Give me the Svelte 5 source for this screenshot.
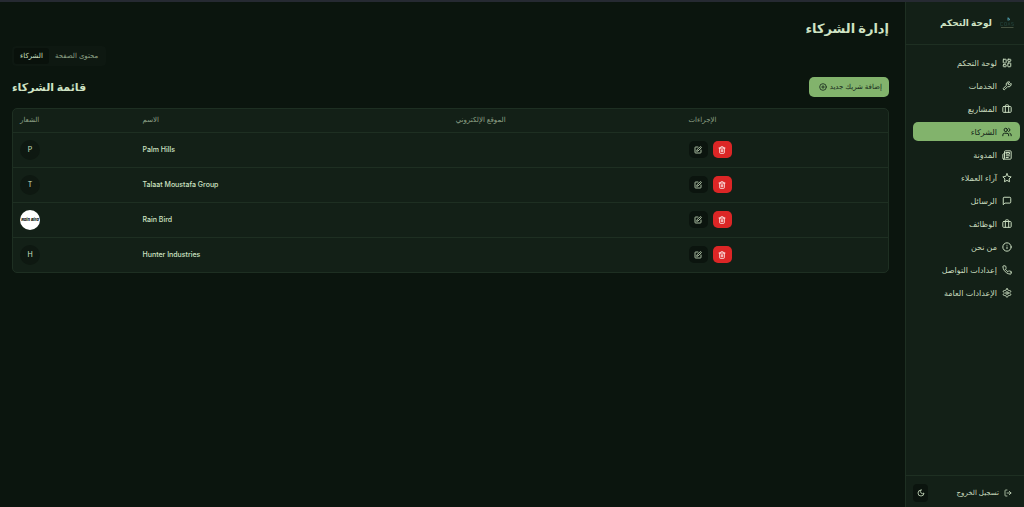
<script lang="ts">
  type Partner = { name: string; website: string; logo?: boolean };

  const menu = [
    { label: 'لوحة التحكم', icon: 'grid' },
    { label: 'الخدمات', icon: 'wrench' },
    { label: 'المشاريع', icon: 'briefcase' },
    { label: 'الشركاء', icon: 'users' },
    { label: 'المدونة', icon: 'newspaper' },
    { label: 'آراء العملاء', icon: 'star' },
    { label: 'الرسائل', icon: 'message' },
    { label: 'الوظائف', icon: 'briefcase' },
    { label: 'من نحن', icon: 'info' },
    { label: 'إعدادات التواصل', icon: 'phone' },
    { label: 'الإعدادات العامة', icon: 'settings' }
  ];

  const tabs = ['الشركاء', 'محتوى الصفحة'];

  let partners = $state<Partner[]>([
    { name: 'Palm Hills', website: '' },
    { name: 'Talaat Moustafa Group', website: '' },
    { name: 'Rain Bird', website: '', logo: true },
    { name: 'Hunter Industries', website: '' }
  ]);
  let activeItem = $state('الشركاء');
  let activeTab = $state('الشركاء');

  function removePartner(name: string) {
    partners = partners.filter((p) => p.name !== name);
  }
</script>

{#snippet icon(name: string)}
  <svg class="icon" viewBox="0 0 24 24" aria-hidden="true">
    {#if name === 'grid'}
      <rect x="3" y="3" width="7" height="9" rx="1" />
      <rect x="14" y="3" width="7" height="5" rx="1" />
      <rect x="14" y="12" width="7" height="9" rx="1" />
      <rect x="3" y="16" width="7" height="5" rx="1" />
    {:else if name === 'wrench'}
      <path d="M14.7 6.3a1 1 0 0 0 0 1.4l1.6 1.6a1 1 0 0 0 1.4 0l3.77-3.77a6 6 0 0 1-7.94 7.94l-6.91 6.91a2.12 2.12 0 0 1-3-3l6.91-6.91a6 6 0 0 1 7.94-7.94l-3.76 3.76z" />
    {:else if name === 'briefcase'}
      <rect x="2" y="6" width="20" height="14" rx="2" />
      <path d="M16 20V4a2 2 0 0 0-2-2h-4a2 2 0 0 0-2 2v16" />
    {:else if name === 'users'}
      <path d="M16 21v-2a4 4 0 0 0-4-4H6a4 4 0 0 0-4 4v2" />
      <circle cx="9" cy="7" r="4" />
      <path d="M22 21v-2a4 4 0 0 0-3-3.87" />
      <path d="M16 3.13a4 4 0 0 1 0 7.75" />
    {:else if name === 'newspaper'}
      <path d="M4 22h16a2 2 0 0 0 2-2V4a2 2 0 0 0-2-2H8a2 2 0 0 0-2 2v16a2 2 0 0 1-2 2Zm0 0a2 2 0 0 1-2-2v-9c0-1.1.9-2 2-2h2" />
      <path d="M18 14h-8M15 18h-5M10 6h8v4h-8V6Z" />
    {:else if name === 'star'}
      <path d="M12 2l3.09 6.26L22 9.27l-5 4.87 1.18 6.88L12 17.77l-6.18 3.25L7 14.14 2 9.27l6.91-1.01L12 2z" />
    {:else if name === 'message'}
      <path d="M21 15a2 2 0 0 1-2 2H7l-4 4V5a2 2 0 0 1 2-2h14a2 2 0 0 1 2 2z" />
    {:else if name === 'info'}
      <circle cx="12" cy="12" r="10" />
      <path d="M12 16v-4M12 8h.01" />
    {:else if name === 'phone'}
      <path d="M22 16.92v3a2 2 0 0 1-2.18 2 19.79 19.79 0 0 1-8.63-3.07 19.5 19.5 0 0 1-6-6 19.79 19.79 0 0 1-3.07-8.67A2 2 0 0 1 4.11 2h3a2 2 0 0 1 2 1.72 12.84 12.84 0 0 0 .7 2.81 2 2 0 0 1-.45 2.11L8.09 9.91a16 16 0 0 0 6 6l1.27-1.27a2 2 0 0 1 2.11-.45 12.84 12.84 0 0 0 2.81.7A2 2 0 0 1 22 16.92z" />
    {:else if name === 'settings'}
      <path d="M12.22 2h-.44a2 2 0 0 0-2 2v.18a2 2 0 0 1-1 1.73l-.43.25a2 2 0 0 1-2 0l-.15-.08a2 2 0 0 0-2.73.73l-.22.38a2 2 0 0 0 .73 2.73l.15.1a2 2 0 0 1 1 1.72v.51a2 2 0 0 1-1 1.74l-.15.09a2 2 0 0 0-.73 2.73l.22.38a2 2 0 0 0 2.73.73l.15-.08a2 2 0 0 1 2 0l.43.25a2 2 0 0 1 1 1.73V20a2 2 0 0 0 2 2h.44a2 2 0 0 0 2-2v-.18a2 2 0 0 1 1-1.73l.43-.25a2 2 0 0 1 2 0l.15.08a2 2 0 0 0 2.73-.73l.22-.39a2 2 0 0 0-.73-2.73l-.15-.08a2 2 0 0 1-1-1.74v-.5a2 2 0 0 1 1-1.74l.15-.09a2 2 0 0 0 .73-2.73l-.22-.38a2 2 0 0 0-2.73-.73l-.15.08a2 2 0 0 1-2 0l-.43-.25a2 2 0 0 1-1-1.73V4a2 2 0 0 0-2-2z" />
      <circle cx="12" cy="12" r="3" />
    {:else if name === 'logout'}
      <path d="M9 21H5a2 2 0 0 1-2-2V5a2 2 0 0 1 2-2h4M16 17l5-5-5-5M21 12H9" />
    {:else if name === 'moon'}
      <path d="M12 3a6 6 0 0 0 9 9 9 9 0 1 1-9-9Z" />
    {:else if name === 'plus'}
      <circle cx="12" cy="12" r="10" />
      <path d="M8 12h8M12 8v8" />
    {:else if name === 'edit'}
      <path d="M12 3H5a2 2 0 0 0-2 2v14a2 2 0 0 0 2 2h14a2 2 0 0 0 2-2v-7" />
      <path d="M18.375 2.625a2.12 2.12 0 0 1 3 3L12 15l-4 1 1-4Z" />
    {:else if name === 'trash'}
      <path d="M3 6h18M19 6v14a2 2 0 0 1-2 2H7a2 2 0 0 1-2-2V6M8 6V4a2 2 0 0 1 2-2h4a2 2 0 0 1 2 2v2M10 11v6M14 11v6" />
    {/if}
  </svg>
{/snippet}

<div class="layout" dir="rtl">
  <aside class="sidebar">
    <header class="brand">
      <svg class="logo" viewBox="0 0 28 24" aria-hidden="true">
        <path d="M16 1v6M16 2l4 3-3 1" stroke="#4a97a6" stroke-width="2" />
        <path d="M6 11H1v6h5M9 11h4v6H9zM16 17l2-6 2 6M27 11h-4v3h4v3h-4" stroke="#203c33" stroke-width="1.4" />
        <path d="M2 21h25" stroke="#6a735c" stroke-width="1.2" />
      </svg>
      <span>لوحة التحكم</span>
    </header>
    <nav>
      {#each menu as item}
        <a
          href="#{item.icon}"
          class:active={item.label === activeItem}
          onclick={() => (activeItem = item.label)}
        >
          {@render icon(item.icon)}
          <span>{item.label}</span>
        </a>
      {/each}
    </nav>
    <footer>
      <button class="logout">
        {@render icon('logout')}
        <span>تسجيل الخروج</span>
      </button>
      <button class="theme" aria-label="الوضع الليلي">{@render icon('moon')}</button>
    </footer>
  </aside>

  <main>
    <h1>إدارة الشركاء</h1>
    <div class="content" dir="ltr">
      <div class="tabs" role="tablist">
        {#each tabs as tab}
          <button
            role="tab"
            aria-selected={tab === activeTab}
            class:selected={tab === activeTab}
            onclick={() => (activeTab = tab)}>{tab}</button
          >
        {/each}
      </div>

      <div class="list-header">
        <h2>قائمة الشركاء</h2>
        <button class="add">
          {@render icon('plus')}
          <span>إضافة شريك جديد</span>
        </button>
      </div>

      <div class="card">
        <table>
          <thead>
            <tr>
              <th class="col-logo">الشعار</th>
              <th class="col-name">الاسم</th>
              <th class="col-site">الموقع الإلكتروني</th>
              <th>الإجراءات</th>
            </tr>
          </thead>
          <tbody>
            {#each partners as partner (partner.name)}
              <tr>
                <td>
                  {#if partner.logo}
                    <span class="avatar image">{partner.name}</span>
                  {:else}
                    <span class="avatar">{partner.name[0]}</span>
                  {/if}
                </td>
                <td class="name">{partner.name}</td>
                <td>{partner.website}</td>
                <td>
                  <div class="actions">
                    <button class="edit" aria-label="تعديل">{@render icon('edit')}</button>
                    <button class="delete" aria-label="حذف" onclick={() => removePartner(partner.name)}>
                      {@render icon('trash')}
                    </button>
                  </div>
                </td>
              </tr>
            {/each}
          </tbody>
        </table>
      </div>
    </div>
  </main>
</div>

<style>
  :global(body) {
    margin: 0;
    background: #0b150e;
  }

  .layout {
    box-sizing: border-box;
    display: flex;
    min-height: 100vh;
    border-top: 2px solid #262a32;
    background: #0b150e;
    color: #cfe3c4;
    font-family: Inter, 'DejaVu Sans', sans-serif;
    font-size: 7px;
    line-height: 10px;
  }

  .layout * {
    box-sizing: border-box;
  }

  button {
    display: flex;
    align-items: center;
    justify-content: center;
    margin: 0;
    padding: 0;
    border: 0;
    background: none;
    color: inherit;
    font: inherit;
    cursor: pointer;
  }

  .icon {
    flex: none;
    width: 8px;
    height: 8px;
    fill: none;
    stroke: currentColor;
    stroke-width: 2.4;
    stroke-linecap: round;
    stroke-linejoin: round;
  }

  .sidebar {
    display: flex;
    flex-direction: column;
    flex: none;
    width: 119px;
    border-left: 1px solid #1e2f22;
    background: #132017;
  }

  .brand {
    display: flex;
    align-items: center;
    gap: 8px;
    height: 43px;
    padding: 0 10px;
    border-bottom: 1px solid #1e2f22;
    font-size: 9px;
    font-weight: 700;
  }

  .logo {
    width: 14px;
    height: 12px;
    fill: none;
  }

  nav {
    display: flex;
    flex: 1;
    flex-direction: column;
    gap: 4px;
    padding: 8px 4px 8px 7px;
  }

  nav a {
    display: flex;
    align-items: center;
    gap: 5px;
    height: 19px;
    padding: 0 8px;
    border-radius: 5px;
    color: #c8dbbe;
    font-size: 8px;
    text-decoration: none;
  }

  nav .icon {
    width: 10px;
    height: 10px;
  }

  nav a.active {
    background: #82b36c;
    color: #14251a;
  }

  footer {
    display: flex;
    align-items: center;
    justify-content: space-between;
    height: 32px;
    padding: 3px 12px 0 7px;
    border-top: 1px solid #1e2f22;
  }

  .logout {
    gap: 5px;
    color: #c8dbbe;
  }

  .theme {
    width: 15px;
    height: 18px;
    border-radius: 4px;
    background: #0b140e;
  }

  main {
    flex: 1;
    min-width: 0;
    padding: 14px 16px 16px 12px;
  }

  h1 {
    margin: 0 0 6px;
    font-size: 13px;
    font-weight: 700;
    line-height: 24px;
  }

  h2 {
    margin: 0;
    font-size: 11px;
    font-weight: 700;
    line-height: 20px;
  }

  .content {
    display: flex;
    flex-direction: column;
  }

  .tabs {
    display: flex;
    align-self: flex-start;
    margin-bottom: 11px;
    padding: 2px;
    border-radius: 4px;
    background: #0e1811;
  }

  .tabs button {
    height: 16px;
    padding: 0 6px;
    border-radius: 3px;
    color: #8fa287;
  }

  .tabs button.selected {
    background: #09110b;
    color: #cfe3c4;
  }

  .list-header {
    display: flex;
    align-items: center;
    justify-content: space-between;
    margin-bottom: 11px;
  }

  .add {
    gap: 3px;
    height: 20px;
    padding: 0 7px 0 10px;
    border-radius: 5px;
    background: #82b36c;
    color: #14251a;
  }

  .card {
    overflow: hidden;
    border: 1px solid #1e2f22;
    border-radius: 5px;
    background: #132017;
  }

  table {
    width: 100%;
    border-collapse: collapse;
    table-layout: fixed;
  }

  th {
    height: 23px;
    padding: 0 7px;
    color: #8fa287;
    font-weight: 400;
    text-align: left;
  }

  td {
    height: 35px;
    padding: 0 7px;
  }

  tbody tr {
    border-top: 1px solid #1e2f22;
  }

  .col-logo {
    width: 14%;
  }

  .col-name {
    width: 35.8%;
  }

  .col-site {
    width: 26.6%;
  }

  .name {
    font-weight: 500;
  }

  .avatar {
    display: flex;
    align-items: center;
    justify-content: center;
    width: 20px;
    height: 20px;
    border-radius: 50%;
    background: #0e1811;
  }

  .avatar.image {
    overflow: hidden;
    background: #fff;
    color: #0a0f0b;
    font-size: 4px;
    font-style: italic;
    font-weight: 800;
    white-space: nowrap;
  }

  .actions {
    display: flex;
    align-items: center;
    gap: 5px;
  }

  .edit,
  .delete {
    width: 19px;
    height: 17px;
    border-radius: 5px;
  }

  .edit {
    background: #0b140e;
  }

  .delete {
    background: #dc2626;
    color: #fff;
  }
</style>
